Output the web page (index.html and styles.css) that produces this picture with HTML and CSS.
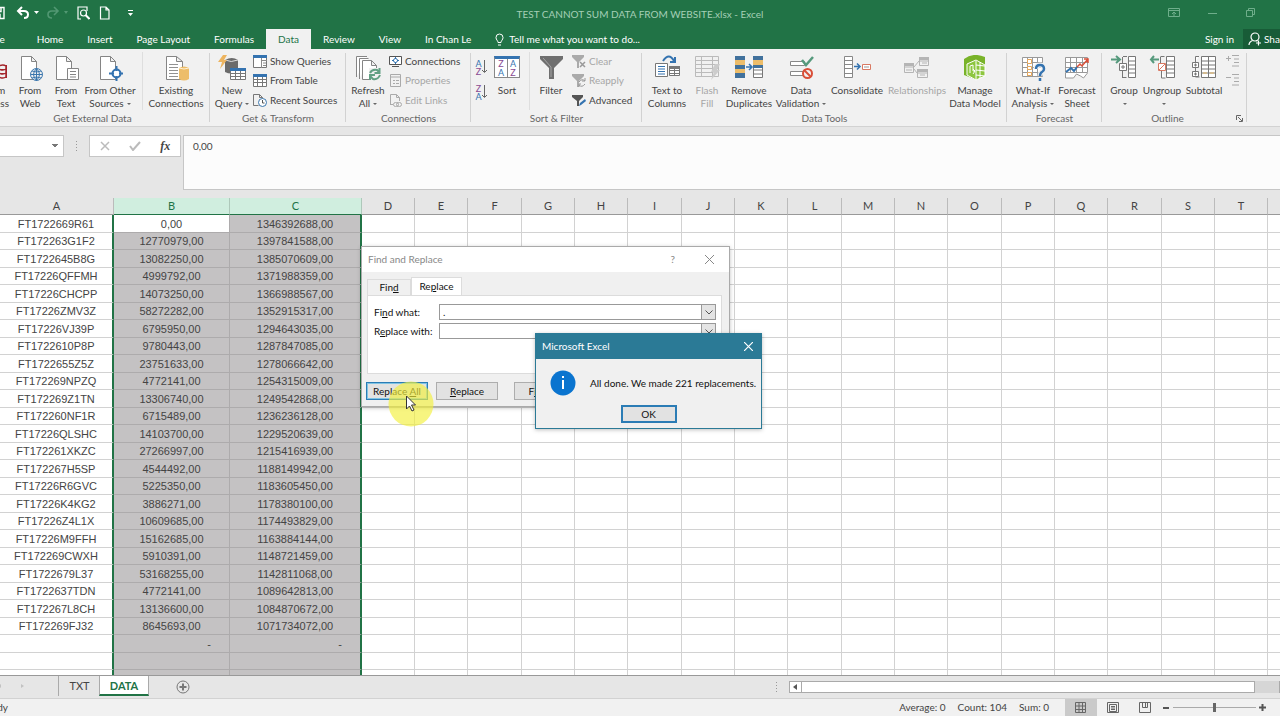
FILE: index.html
```html
<!DOCTYPE html>
<html lang="en">
<head>
    <meta charset="UTF-8">
    <title>TEST CANNOT SUM DATA FROM WEBSITE.xlsx - Excel</title>
    <link rel="stylesheet" href="styles.css">
    <script src="script.js" defer></script>
</head>
<body>
    <header class="titlebar">
        <div class="quick">
            <button class="tool" aria-label="Save"><svg width="14" height="14" fill="none" stroke="#fff" stroke-width="1.4"><path d="M1 1.500h12v11H3l-2-2zM4 1.500v4h6v-4M4 12.500v-4h5v4"/></svg></button>
            <button class="tool undo" aria-label="Undo"><svg width="24" height="14" fill="none" stroke="#fff" stroke-width="2"><path d="M6 1 2 5l4 4M2 5h6q4 0 4 3.500T8 12"/><path d="M18 5h5l-2.500 3z" fill="#fff" stroke="none"/></svg></button>
            <button class="tool redo" aria-label="Redo"><svg width="24" height="14" fill="none" stroke="#529873" stroke-width="1.600"><path d="M8 1l4 4-4 4M12 5H6Q2 5 2 8.500T6 12"/><path d="M18 5h4l-2 3z" fill="#529873" stroke="none"/></svg></button>
            <button class="tool preview" aria-label="Print Preview"><svg width="14" height="14" fill="none" stroke="#fff" stroke-width="1.200"><path d="M11 5V1H2v12h3"/><circle cx="7.500" cy="7" r="3"/><path d="M9.500 9l4 4" stroke-width="2"/></svg></button>
            <button class="tool new" aria-label="New"><svg width="12" height="14" fill="none" stroke="#fff" stroke-width="1.200"><path d="M1.500 1H7l3 3v9H1.500zM7 1v3h3"/></svg></button>
            <button class="tool" aria-label="Customize"><svg width="8" height="8"><path d="M1 1h5v1H1zM1 4h5L3.500 7z" fill="#fff"/></svg></button>
        </div>
        <h1 class="title">TEST CANNOT SUM DATA FROM WEBSITE.xlsx - Excel</h1>
        <div class="window-tools">
            <button class="tool" aria-label="Ribbon options"><svg width="12" height="10" fill="none" stroke="#6fae8b"><path d="M.5.5h11v8H.5zM.5 2.500h11M6 8V4M4 6l2-2 2 2"/></svg></button>
            <button class="tool" aria-label="Minimize"><svg width="10" height="10" stroke="#6fae8b"><path d="M0 5.500h9"/></svg></button>
            <button class="tool" aria-label="Restore"><svg width="10" height="10" fill="none" stroke="#6fae8b"><path d="M.5 2.500h6v6h-6zM2.500 2V.5h6v6H7"/></svg></button>
        </div>
    </header>

    <nav class="tabs">
        <a class="tab file" href="#">File</a>
        <a class="tab" href="#">Home</a>
        <a class="tab" href="#">Insert</a>
        <a class="tab" href="#">Page Layout</a>
        <a class="tab" href="#">Formulas</a>
        <a class="tab active" href="#">Data</a>
        <a class="tab" href="#">Review</a>
        <a class="tab" href="#">View</a>
        <a class="tab" href="#">In Chan Le</a>
        <a class="tab tell" href="#"><svg width="9" height="13" fill="none" stroke="#fff"><path d="M3 9.500C3 7.500 1 7 1 4.500a3.500 3.500 0 0 1 7 0C8 7 6 7.500 6 9.500zM3 12h3"/></svg>Tell me what you want to do...</a>
        <a class="sign" href="#">Sign in</a>
        <a class="share" href="#"><svg width="14" height="14" fill="none" stroke="#fff" stroke-width="1.200"><circle cx="7" cy="5" r="4"/><path d="M1 13q0-3 3.500-4.500M8 8.500l1.500.5M10.500 8.500v5M8 11h5"/></svg>Share</a>
    </nav>

    <section class="ribbon">
        <div class="group external">
            <div class="items">
                <button class="big w36"><svg width="26" height="26"><path d="M3.500 1.500h10l5 5v18h-15zM13.500 1.500v5h5" fill="#fff" stroke="#858585"/><path d="M12 10h14v13H12z" fill="#a4262c"/><path d="M18 11q4-2 7 0v11q-3 2-7 0zM18 14q4 2 7 0M18 18q4 2 7 0" fill="#f1f1f1" stroke="#a4262c" stroke-width="1.500"/></svg><span>From<br>Access</span></button>
                <button class="big w36"><svg width="26" height="26" fill="none"><path d="M4.500 1.500h10l5 5v18h-15zM14.500 1.500v5h5" fill="#fff" stroke="#858585"/><circle cx="19.500" cy="19.500" r="6" fill="#f1f1f1" stroke="#3a76ad"/><path d="M13.500 19.500h12M19.500 13.500v12M15 16q4.500 2 9 0M15 23q4.500-2 9 0M19.500 13.500q-6 6 0 12 6-6 0-12" stroke="#3a76ad"/></svg><span>From<br>Web</span></button>
                <button class="big w36"><svg width="26" height="26" fill="#fff" stroke="#858585"><path d="M3.500 1.500h10l5 5v18h-15zM13.500 1.500v5h5"/><path d="M14.500 13.500h11v11h-11zM17 16.500h6M17 19.500h6M17 22h6"/></svg><span>From<br>Text</span></button>
                <button class="big w52"><svg width="26" height="26" fill="none"><path d="M3.500 1.500h10l5 5v18h-15zM13.500 1.500v5h5" fill="#fff" stroke="#858585"/><circle cx="19.500" cy="18.500" r="4" fill="#fff" stroke="#3473b0" stroke-width="2"/><path d="M19.500 11v5M19.500 21v5M12 18.500h5M22 18.500h5" stroke="#3473b0" stroke-width="2"/></svg><span>From Other<br>Sources<i class="arrow"></i></span></button>
                <i class="rule"></i>
                <button class="big w60"><svg width="26" height="26"><path d="M3.500 1.500h10l6 5v18h-16zM13.500 1.500v5h6" fill="#fff" stroke="#858585"/><path d="M6 9.500h9M6 12.500h9M6 15.500h9M6 18.500h9M6 21.500h9" stroke="#929292"/><path d="M16 13q5-3 10 0v11q-5 3-10 0z" fill="#edbd6a"/><path d="M16 13q5 2 10 0" stroke="#fff1d3" fill="none"/></svg><span>Existing<br>Connections</span></button>
            </div>
            <h2>Get External Data</h2>
        </div>
        <div class="group transform">
            <div class="items">
                <button class="big w36"><svg width="28" height="26"><path d="M7 5v12q6 3 13 0V5q-6-4-13 0" fill="#6b6b6b"/><path d="M7 5q6 3 13 0" stroke="#ddd" fill="none"/><path d="M5 0H9L6 5h3L2 14l2-7H0z" fill="#edb45f"/><path d="M12.500 13.500h15v11h-15z" fill="#fff" stroke="#777"/><path d="M12 13h16v3H12z" fill="#3473b0"/><path d="M12.500 18.500h15M12.500 21.500h15M17.500 16v9M22.500 16v9" stroke="#777"/></svg><span>New<br>Query<i class="arrow"></i></span></button>
                <div class="stack">
                    <button class="small"><svg width="14" height="13"><path d="M.5.5h13v12H.5z" fill="#fff" stroke="#777"/><path d="M0 0h14v3H0z" fill="#3473b0"/><path d="M8.500 3v10M9 5.500h5M10 8h3M10 10.500h3" stroke="#8c8c8c"/></svg>Show Queries</button>
                    <button class="small"><svg width="14" height="13"><path d="M.5.5h13v12H.5z" fill="#fff" stroke="#777"/><path d="M0 0h14v3H0z" fill="#3473b0"/><path d="M0 5.500h14M0 8.500h14M4.500 3v10M9.500 3v10" stroke="#777"/></svg>From Table</button>
                    <button class="small"><svg width="14" height="13" fill="none"><path d="M.5.5h6l3 3v4M6.500.5v3h3M.5.5v11h5" stroke="#777"/><circle cx="9.500" cy="8.500" r="4" fill="#fff" stroke="#3a76ad"/><path d="M9.500 6v3h2" stroke="#555"/></svg>Recent Sources</button>
                </div>
            </div>
            <h2>Get &amp; Transform</h2>
        </div>
        <div class="group connections">
            <div class="items">
                <button class="big w36"><svg width="26" height="26" fill="none"><path d="M1.500 22V1.500H12M4.500 24V3.500h9M7.500 24.500V5.500h9l5 5v14zM16.500 5.500v5h5" fill="#fff" stroke="#858585"/><path d="M14 13h12v13H14z" fill="#f1f1f1"/><path d="M15 18q2-4 7-3l2 2M25 20q-2 5-7 4l-3-3M24.500 13v5h-5M15 25v-5h5" stroke="#62a083" stroke-width="2"/></svg><span>Refresh<br>All<i class="arrow"></i></span></button>
                <div class="stack">
                    <button class="small"><svg width="13" height="13" fill="none"><path d="M.5 1.500h12v8H.5zM3 11.500h7" fill="#fff" stroke="#555"/><circle cx="6.500" cy="5.500" r="2" stroke="#3473b0"/><path d="M6.500 2v2M6.500 7v2M3 5.500h2M8 5.500h2" stroke="#3473b0"/></svg>Connections</button>
                    <button class="small" disabled><svg width="13" height="13" fill="none" stroke="#aaa"><path d="M1.500.5h10v12h-10zM1.500 3h10M4 6.500h2M7 6.500h3M4 9.500h2M7 9.500h3"/></svg>Properties</button>
                    <button class="small" disabled><svg width="13" height="13" fill="none" stroke="#aaa"><path d="M1.500 11V.5h6l3 3V7M7.500.5v3h3M1.500 10.500H4"/><rect x="4.500" y="8.500" width="5" height="4" rx="2"/><rect x="7.500" y="8.500" width="5" height="4" rx="2"/></svg>Edit Links</button>
                </div>
            </div>
            <h2>Connections</h2>
        </div>
        <div class="group sorting">
            <div class="items">
                <div class="orders">
                    <button class="order" aria-label="Sort A to Z"><b>A</b><b class="z">Z</b><svg width="5" height="14" fill="none" stroke="#666"><path d="M2.500 0v12M0 10l2.500 2.500L5 10"/></svg></button>
                    <button class="order" aria-label="Sort Z to A"><b class="z">Z</b><b>A</b><svg width="5" height="14" fill="none" stroke="#666"><path d="M2.500 0v12M0 10l2.500 2.500L5 10"/></svg></button>
                </div>
                <button class="big w32"><span class="sort-icon"><b class="z">Z</b><b>A</b><b>A</b><b class="z">Z</b></span><span>Sort</span></button>
                <i class="rule"></i>
                <button class="big w36"><svg width="26" height="26"><path d="M2 1h23v3l-9 9v11h-5V13L2 4z" fill="#6f6f6f"/><path d="M5 3l8 9v10" fill="none" stroke="#a5a5a5"/></svg><span>Filter</span></button>
                <div class="stack">
                    <button class="small" disabled><svg width="14" height="13"><path d="M0 0h12v2L7 7v6H5V7L0 2z" fill="#aaa"/><path d="M8 7l5 5M13 7l-5 5" stroke="#999" stroke-width="1.500"/></svg>Clear</button>
                    <button class="small" disabled><svg width="14" height="13" fill="none"><path d="M0 0h12v2L7 7v6H5V7L0 2z" fill="#aaa"/><path d="M7 8q3-4 6-1M13 4v3h-3M13 10q-3 4-6 1M7 13v-3h2" stroke="#999"/></svg>Reapply</button>
                    <button class="small"><svg width="14" height="13"><path d="M0 1h11v2L7 7v5H5V7L0 3z" fill="#555"/><path d="M7 12l1-3 5-4 1 2-5 4z" fill="#3473b0"/></svg>Advanced</button>
                </div>
            </div>
            <h2>Sort &amp; Filter</h2>
        </div>
        <div class="group tools">
            <div class="items">
                <button class="big w48"><svg width="26" height="26" fill="none"><path d="M1.500 8.500h12v13h-12z" fill="#fff" stroke="#777"/><path d="M4 11.500h7M4 14h7M4 16.500h7M4 19h7" stroke="#3473b0"/><path d="M9 6q6-9 11 0M21 2v5h-5" stroke="#3473b0" stroke-width="2"/><path d="M15.500 11.500h10v9h-10zM15.500 15.500h10M15.500 18.500h10M20.500 12v9" fill="#fff" stroke="#777"/><path d="M15 11h11v3H15z" fill="#777"/></svg><span>Text to<br>Columns</span></button>
                <button class="big w32" disabled><svg width="26" height="26" fill="none" stroke="#bbb"><path d="M1.500 1.500h23v20h-23zM1.500 5.500h23M1.500 9.500h23M1.500 13.500h23M1.500 17.500h18M7.500 2v20M18.500 2v20"/><path d="M21 9h5l-3 6h3l-9 10 3-8h-3z" fill="#ccc" stroke="none"/></svg><span>Flash<br>Fill</span></button>
                <button class="big w52"><svg width="28" height="26" fill="#fff" stroke="#777"><path d="M.5 1.500h9v21h-9zM18.500 1.500h9v21h-9zM18.500 15h9M18.500 19h9"/><path d="M0 1h10v4H0zM0 10h10v4H0zM0 18h10v5H0zM18 1h10v4H18z" fill="#41719c" stroke="none"/><path d="M0 5h10v5H0zM0 14h10v4H0zM18 5h10v5H18z" fill="#edbd6a" stroke="none"/><path d="M18 10h10v3H18z" fill="#41719c" stroke="none"/><path d="M11 12h5M14 9l3 3-3 3" stroke="#3473b0" stroke-width="1.500" fill="none"/></svg><span>Remove<br>Duplicates</span></button>
                <button class="big w52"><svg width="26" height="26" fill="none"><path d="M2.500 6.500h14v4h-14zM2.500 16.500h14v4h-14z" fill="#fff" stroke="#888"/><path d="M14 5l4 5 7-8" stroke="#569a7d" stroke-width="2.500"/><circle cx="19.500" cy="18.500" r="4.500" fill="#f1f1f1" stroke="#d94f38" stroke-width="2"/><path d="M16 15l7 7" stroke="#d94f38" stroke-width="2"/></svg><span>Data<br>Validation<i class="arrow"></i></span></button>
                <button class="big w60"><svg width="28" height="26" fill="none"><path d="M1.500 1.500h8v21h-8zM1.500 5.500h8M1.500 9.500h8M1.500 13.500h8M1.500 18.500h8" fill="#fff" stroke="#888"/><path d="M11 11.500h6M14 8.500l3 3-3 3" stroke="#3473b0" stroke-width="1.500"/><path d="M19.500 9.500h8v5h-8z" fill="#fff" stroke="#d97962"/><path d="M21 12h5" stroke="#999"/></svg><span>Consolidate</span></button>
                <button class="big w60" disabled><svg width="26" height="26" fill="none" stroke="#b5b5b5"><path d="M.5 8.500h9v9h-9zM.5 12h9M2 15h6M15.500 2.500h9v8h-9zM15.500 6h9M18 8h5M13.500 14.500h10v8h-10zM13.500 18h10M16 20h5M10 12l5-6M10 14l3 4"/><path d="M0 8h10v3H0zM15 2h10v3H15zM13 14h11v3H13z" fill="#b5b5b5" stroke="none"/></svg><span>Relationships</span></button>
                <button class="big w56"><svg width="26" height="26"><path d="M2 4q9-7 21-2v14L15 25 2 20z" fill="#79b329"/><path d="M5 9l9-4 9 5v11l-9 4-9-5z" fill="#8dc63f" stroke="#fff"/><path d="M14 6v19M14 10l9 1M14 15l9 1M14 20l9 1M18 7v16" stroke="#fff"/><path d="M8 18v-7l3-1v6h2M11 14l2 2-2 3" fill="none" stroke="#fff"/></svg><span>Manage<br>Data Model</span></button>
            </div>
            <h2>Data Tools</h2>
        </div>
        <div class="group forecast">
            <div class="items">
                <button class="big w44"><svg width="26" height="26" fill="none"><path d="M2.500 2.500h20v19h-20zM2.500 7.500h20M2.500 12.500h20M2.500 17.500h20M7.500 2v20M12.500 2v20M17.500 2v20" fill="#fff" stroke="#999"/><path d="M7.500 4.500h4v4h-4zM7.500 11.500h4v3h-4zM7.500 17.500h4v3h-4z" fill="#fff" stroke="#e6a75a"/><path d="M16 14q0-4 4-4t4 4q0 2-2 3t-2 4" stroke="#f1f1f1" stroke-width="5"/><path d="M16 14q0-4 4-4t4 4q0 2-2 3t-2 4M20 23v3" stroke="#3473b0" stroke-width="2.500"/></svg><span>What-If<br>Analysis<i class="arrow"></i></span></button>
                <button class="big w44"><svg width="26" height="26" fill="none"><path d="M1.500 2.500h22v15h-22zM1.500 7.500h22M1.500 12.500h22M6.500 3v15M12.500 3v15M18.500 3v15M1.500 18v5h8l3-4 4 2 3 2 4-5" fill="#fff" stroke="#999"/><path d="M2 17l5-4 3 3 3-4" stroke="#3473b0" stroke-width="2"/><path d="M13 12l3-3 2 2 6-7M20 4h4v4" stroke="#d94f38" stroke-width="1.500"/></svg><span>Forecast<br>Sheet</span></button>
            </div>
            <h2>Forecast</h2>
        </div>
        <div class="group outline">
            <div class="items">
                <button class="big w36"><svg width="26" height="26" fill="none" stroke="#777"><path d="M17.500 1.500h7v21h-7zM17.500 6h7M17.500 10h7M17.500 14h7M17.500 18h7M12 1.500h4M11.500 2v7M11.500 15v8M11.500 22.500h4M8.500 8.500h7v7h-7zM10 12h4M12 10v4" fill="#fff"/><path d="M0 4.500h8M5 1l4 3.500L5 8" stroke="#569a7d" stroke-width="2"/></svg><span>Group<br><i class="arrow"></i></span></button>
                <button class="big w40"><svg width="26" height="26" fill="none" stroke="#777"><path d="M17.500 1.500h8v21h-8zM17.500 6h8M17.500 10h8M17.500 14h8M17.500 18h8M11.500 1.500h4M11.500 2v7M12.500 16v7h4" fill="#fff"/><path d="M9.500 8.500h7v7h-7zM10 15l6-6" fill="#fff" stroke="#d97962"/><path d="M2 4.500h8M5 1L2 4.500 5 8" stroke="#569a7d" stroke-width="2"/></svg><span>Ungroup<br><i class="arrow"></i></span></button>
                <button class="big w44"><svg width="26" height="26" fill="#fff" stroke="#777"><path d="M10.500 1.500h14v21h-14zM10.500 6h14M10.500 10h14M10.500 14h14M10.500 18h14M17.500 2v20M8 1.500H4.500V7M4.500 13v3M4.500 22h4M1.500 7.500h6v5h-6zM1.500 16.500h6v5h-6zM3 10h3M4.500 8.500v3M3 19h3M4.500 17.500v3"/><path d="M12 18h4M19 18h4" stroke="#edbd6a"/></svg><span>Subtotal</span></button>
                <div class="details">
                    <button class="tool" aria-label="Show Detail" disabled><svg width="13" height="12" fill="none" stroke="#aaa"><path d="M0 3.500h5M2.500 1v5M6 .5h7M8 4h5M8 7.500h5M6 11h7"/></svg></button>
                    <button class="tool" aria-label="Hide Detail" disabled><svg width="13" height="12" fill="none" stroke="#aaa"><path d="M0 3.500h5M6 .5h7M8 4h5M8 7.500h5M6 11h7"/></svg></button>
                </div>
            </div>
            <h2>Outline</h2>
            <button class="launcher" aria-label="Outline settings"><svg width="7" height="7" fill="none" stroke="#666"><path d="M.5 5V.5H5M2 2l4 4M6.500 3v3.500H3"/></svg></button>
        </div>
    </section>

    <section class="formula">
        <select class="name-box" aria-label="Name Box"><option></option></select>
        <i class="dots"></i>
        <div class="entry">
            <button class="tool" aria-label="Cancel"><svg width="10" height="10" stroke="#bbb" stroke-width="1.500"><path d="M1 1l8 8M9 1L1 9"/></svg></button>
            <button class="tool" aria-label="Enter"><svg width="12" height="10" fill="none" stroke="#bbb" stroke-width="2"><path d="M1 5l3 4 7-8"/></svg></button>
            <button class="tool fx" aria-label="Insert Function">fx</button>
        </div>
        <textarea class="formula-text" aria-label="Formula bar">0,00</textarea>
    </section>

    <main class="sheet">
        <table>
            <colgroup id="cols"></colgroup>
            <thead><tr id="letters"></tr></thead>
            <tbody id="rows"></tbody>
        </table>
    </main>

    <footer>
        <div class="sheet-bar">
            <span class="move"><i></i><i></i></span>
            <a class="sheet-tab" href="#">TXT</a>
            <a class="sheet-tab current" href="#">DATA</a>
            <button class="tool add" aria-label="New sheet"><svg width="14" height="14" fill="none" stroke="#777"><circle cx="7" cy="7" r="6"/><path d="M3.500 7h7M7 3.500v7" stroke-width="2"/></svg></button>
            <i class="dots"></i>
            <div class="scroll">
                <button class="back" aria-label="Scroll left"><svg width="4" height="6"><path d="M4 0v6L0 3z" fill="#555"/></svg></button>
                <div class="thumb"></div>
                <button class="forward" aria-label="Scroll right"></button>
            </div>
        </div>
        <div class="status">
            <span class="ready">Ready</span>
            <span class="sum">Average: 0</span>
            <span class="sum">Count: 104</span>
            <span class="sum">Sum: 0</span>
            <div class="views">
                <button class="view current" aria-label="Normal"><svg width="12" height="12" fill="none" stroke="#666"><path d="M.5.5h10v10H.5zM.5 4h10M.5 7.500h10M4 .5v10M7.500.5v10"/></svg></button>
                <button class="view" aria-label="Page Layout"><svg width="12" height="12" fill="none" stroke="#666"><path d="M.5.5h11v10H.5zM2.500 2.500h7v7h-7zM4 4.500h4M4 6h4M4 7.500h4"/></svg></button>
                <button class="view" aria-label="Page Break Preview"><svg width="12" height="12" fill="none" stroke="#666"><path d="M.5.5h11v10H.5zM3.500.5v5h5v-5M6.500.5v5"/></svg></button>
            </div>
            <button class="zoom" aria-label="Zoom out"><svg width="6" height="6"><path d="M0 2h6v2H0z" fill="#555"/></svg></button>
            <input class="slider" type="range" aria-label="Zoom" value="50">
            <button class="zoom" aria-label="Zoom in"><svg width="7" height="7" fill="none" stroke="#555" stroke-width="2"><path d="M0 3.500h7M3.500 0v7"/></svg></button>
        </div>
    </footer>

    <div class="dialog find" role="dialog" aria-label="Find and Replace">
        <div class="dialog-title">Find and Replace
            <button class="help" aria-label="Help">?</button>
            <button class="close" aria-label="Close"><svg width="9" height="9" stroke="#888"><path d="M0 0l9 9M9 0L0 9"/></svg></button>
        </div>
        <div class="dialog-tabs">
            <button class="dialog-tab">Fin<u>d</u></button>
            <button class="dialog-tab current">Re<u>p</u>lace</button>
        </div>
        <div class="fields">
            <label for="what">Fi<u>n</u>d what:</label>
            <div class="combo"><input id="what" type="text" value="."><button aria-label="History"><svg width="8" height="5" fill="none" stroke="#555"><path d="M.5.5L4 4 7.500.5"/></svg></button></div>
            <label for="with">R<u>e</u>place with:</label>
            <div class="combo"><input id="with" type="text"><button aria-label="History"><svg width="8" height="5" fill="none" stroke="#555"><path d="M.5.5L4 4 7.500.5"/></svg></button></div>
        </div>
        <div class="actions">
            <button class="action focus">Replace <u>A</u>ll</button>
            <button class="action"><u>R</u>eplace</button>
            <button class="action next">F<u>i</u>nd All</button>
        </div>
    </div>

    <div class="dialog message" role="alertdialog" aria-label="Microsoft Excel">
        <div class="message-title">Microsoft Excel
            <button class="close" aria-label="Close"><svg width="9" height="9" stroke="#fff" stroke-width="1.200"><path d="M0 0l9 9M9 0L0 9"/></svg></button>
        </div>
        <div class="message-text">
            <svg width="26" height="26"><circle cx="13" cy="13" r="12.500" fill="#0a74cf"/><path d="M12 10h2v9h-2zM12 6h2v2h-2z" fill="#fff"/></svg>
            <p>All done. We made 221 replacements.</p>
        </div>
        <button class="ok">OK</button>
    </div>

    <div class="pointer"><svg width="46" height="46"><circle cx="23" cy="23" r="22.500" fill="#f3f03c" fill-opacity=".65"/><path d="M18.500 15v13l3-3 2.500 5 2-1-2.500-5h4z" fill="#fff" stroke="#333"/></svg></div>
</body>
</html>
```
FILE: styles.css
```css
* {
    box-sizing: border-box;
}

body {
    margin: 0;
    padding-bottom: 4px;
    height: 100vh;
    display: flex;
    flex-direction: column;
    overflow: hidden;
    position: relative;
    background-color: #fff;
    color: #444;
    font-family: Lato, "Open Sans", sans-serif;
    font-size: 10px;
    line-height: 13px;
}

button,
input,
select,
textarea {
    font: inherit;
    color: inherit;
    margin: 0;
    padding: 0;
    border: none;
    border-radius: 0;
    background: none;
}

a {
    color: inherit;
    text-decoration: none;
}

svg {
    display: block;
    flex: none;
}

.tool {
    display: flex;
}

/* Title bar */
.titlebar {
    display: grid;
    grid-template-columns: 1fr auto 1fr;
    align-items: center;
    height: 29px;
    background-color: #217346;
    color: #a5cfb6;
}

.quick {
    display: flex;
    align-items: center;
    margin-left: -9px;
    padding-bottom: 4px;
}

.undo {
    margin-left: 11px;
}

.redo,
.preview {
    margin-left: 6px;
}

.new {
    margin: 0 16px 0 9px;
}

.title {
    margin: 0;
    font-size: 10px;
    font-weight: normal;
}

.window-tools {
    display: flex;
    justify-content: flex-end;
    gap: 28px;
    padding: 0 24px 4px 0;
}

/* Ribbon tabs */
.tabs {
    display: flex;
    height: 20px;
    margin-left: -23px;
    line-height: 20px;
    background-color: #217346;
    color: #fff;
}

.tab {
    padding: 0 12px;
    white-space: nowrap;
}

.tab.file {
    padding-right: 20px;
}

.tab.active {
    background-color: #f1f1f1;
    color: #217346;
}

.tell,
.share {
    display: flex;
    align-items: center;
    gap: 5px;
}

.sign {
    margin-left: auto;
    padding-right: 9px;
}

.share {
    width: 37px;
    padding-left: 5px;
    gap: 2px;
    overflow: hidden;
    background-color: #185c37;
}

/* Ribbon */
.ribbon {
    display: flex;
    height: 78px;
    margin-left: -25px;
    background-color: #f1f1f1;
    border-bottom: 1px solid #d2d2d2;
}

.group {
    position: relative;
    flex: none;
    display: flex;
    flex-direction: column;
    padding-top: 3px;
}

.group::after {
    content: "";
    position: absolute;
    top: 4px;
    right: 0;
    bottom: 4px;
    border-right: 1px solid #d2d2d2;
}

.external {
    width: 235px;
}

.transform {
    width: 136px;
}

.connections {
    width: 125px;
}

.sorting {
    width: 171px;
}

.tools {
    width: 365px;
}

.forecast {
    width: 95px;
}

.outline {
    width: 145px;
}

.group h2 {
    margin: 0;
    font-size: 10px;
    font-weight: normal;
    line-height: 16px;
    text-align: center;
    color: #666;
}

.outline h2 {
    padding-right: 14px;
}

.items {
    display: flex;
    height: 59px;
    padding-left: 4px;
}

.external .items,
.tools .items {
    padding-left: 1px;
}

.big {
    display: flex;
    flex-direction: column;
    align-items: center;
    flex: none;
    padding-top: 3px;
    white-space: nowrap;
}

.big svg {
    margin-bottom: 3px;
}

.w32 {
    width: 32px;
}

.w36 {
    width: 36px;
}

.w40 {
    width: 40px;
}

.w44 {
    width: 44px;
}

.w48 {
    width: 48px;
}

.w52 {
    width: 52px;
}

.w56 {
    width: 56px;
}

.w60 {
    width: 60px;
}

.arrow {
    display: inline-block;
    margin: 0 0 2px 3px;
    border: 2px solid transparent;
    border-top-color: #666;
    border-bottom: none;
}

.rule {
    width: 1px;
    margin: 0 3px 0 6px;
    background-color: #dedede;
}

.stack {
    display: grid;
    grid-template-rows: repeat(3, 1fr);
    margin-left: 3px;
}

.small {
    display: flex;
    align-items: center;
    gap: 3px;
    white-space: nowrap;
}

button:disabled {
    color: #a6a6a6;
}

.orders {
    display: flex;
    flex-direction: column;
    gap: 9px;
    margin-right: 4px;
    padding-top: 8px;
}

.order {
    display: grid;
    grid-template-columns: 7px 5px;
    grid-template-rows: 8px 8px;
    line-height: 8px;
}

.order svg {
    grid-area: 1 / 2 / 3 / 3;
}

.order b,
.sort-icon b {
    font-size: 9px;
    font-weight: normal;
    color: #3473b0;
}

.order .z,
.sort-icon .z {
    color: #8a4a93;
}

.sort-icon {
    display: grid;
    grid-template-columns: 12px 12px;
    grid-template-rows: 9px 9px;
    margin: 1px 0 6px;
    line-height: 9px;
    border: 1px solid #888;
    border-top: 3px solid #3473b0;
    background: linear-gradient(#888, #888) center / 1px 100% no-repeat #fff;
}

.details {
    display: flex;
    flex-direction: column;
    gap: 7px;
    padding-top: 3px;
}

.launcher {
    position: absolute;
    right: 4px;
    bottom: 4px;
}

/* Formula bar */
.formula {
    display: flex;
    align-items: flex-start;
    height: 71px;
    padding-top: 8px;
    background-color: #e6e6e6;
}

.name-box {
    appearance: none;
    width: 64px;
    height: 22px;
    border: 1px solid #c6c6c6;
    border-left: none;
    /* two triangles side by side draw the arrow */
    background: linear-gradient(to top right, transparent 50%, #777 50%) 52px 8px / 3px 4px no-repeat, linear-gradient(to top left, transparent 50%, #777 50%) 55px 8px / 3px 4px no-repeat, #fff;
}

.dots {
    width: 1px;
    height: 10px;
    margin: 6px 12px 0;
    background: repeating-linear-gradient(#999 0 1px, transparent 1px 3px);
}

.entry {
    display: flex;
    align-items: center;
    justify-content: space-around;
    width: 92px;
    height: 22px;
    border: 1px solid #c6c6c6;
    background-color: #fff;
}

.fx {
    font-family: "Liberation Serif", serif;
    font-size: 12px;
    font-style: italic;
    font-weight: bold;
}

.formula-text {
    flex: 1;
    height: 55px;
    margin-left: 2px;
    padding: 4px 9px;
    border: 1px solid #c6c6c6;
    border-right: none;
    background-color: #fcfcfc;
    resize: none;
}

/* Sheet */
.sheet {
    flex: 1;
    min-height: 0;
    overflow: hidden;
}

table {
    width: 0;
    table-layout: fixed;
    border-spacing: 0;
}

.col-a {
    width: 114px;
}

.col-b {
    width: 116px;
}

.col-c {
    width: 132px;
}

.col {
    width: 53px;
}

.col:nth-child(3n) {
    width: 54px;
}

th,
td {
    padding: 0;
    text-align: center;
    overflow: hidden;
    white-space: nowrap;
    border-right: 1px solid #d2d2d2;
}

th {
    height: 17px;
    font-size: 11px;
    font-weight: normal;
    line-height: 16px;
    background-color: #e6e6e6;
    border-bottom: 1px solid #999;
    border-right-color: #bbb;
}

td {
    height: 18px;
    font-family: "Liberation Sans", Arial, sans-serif;
    font-size: 11px;
    line-height: 16px;
    border-bottom: 1px solid #d2d2d2;
}

tr:nth-child(even) td {
    height: 17px;
}

.picked {
    background-color: #c4c2c3;
    border-color: #adabac;
}

th.picked {
    background-color: #d0eedf;
    color: #217346;
    border-right-color: #aec8ba;
    border-bottom-color: #217346;
}

td:nth-child(1),
td:nth-child(3) {
    border-right: 2px solid #217346;
}

tr:first-child td:nth-child(2) {
    background-color: #fff;
}

.picked.dash {
    padding-right: 18px;
    text-align: right;
}

/* Sheet tabs and status bar */
.sheet-bar {
    display: flex;
    height: 23px;
    background-color: #e6e6e6;
    border-top: 1px solid #999;
}

.move {
    display: flex;
    align-items: center;
    gap: 20px;
    width: 59px;
    height: 20px;
    margin-right: 1px;
    border-right: 1px solid #aaa;
}

.move i {
    border: 2px solid transparent;
    border-left: 3px solid #c2c2c2;
    border-right: none;
}

.move i:first-child {
    border-left: none;
    border-right: 3px solid #c2c2c2;
    margin-left: -2px;
}

.sheet-tab {
    width: 39px;
    height: 20px;
    font-size: 11px;
    line-height: 20px;
    text-align: center;
}

.sheet-tab.current {
    width: 50px;
    font-weight: bold;
    color: #217346;
    background-color: #fff;
    border: 1px solid #aaa;
    border-top: none;
    border-bottom: 2px solid #217346;
}

.add {
    margin: 4px auto 0 27px;
}

.scroll {
    display: flex;
    width: calc(39% + 4px);
    height: 12px;
    margin-top: 5px;
    margin-right: -12px;
    background-color: #d6d6d6;
}

.back,
.forward {
    display: flex;
    align-items: center;
    justify-content: center;
    width: 13px;
    border: 1px solid #aaa;
    background-color: #fff;
}

.thumb {
    flex: 1;
    margin-right: 24px;
    border: 1px solid #aaa;
    border-left: none;
    background-color: #fff;
}

.status {
    display: flex;
    align-items: center;
    height: 18px;
    padding-right: 14px;
    background-color: #f1f1f1;
    border-top: 1px solid #d2d2d2;
}

.ready {
    margin: 0 auto 0 -19px;
}

.sum {
    margin-right: 12px;
}

.views {
    display: flex;
    height: 17px;
    margin: 0 2px 0 4px;
}

.view {
    display: flex;
    align-items: center;
    justify-content: center;
    width: 32px;
}

.view.current {
    background-color: #cacaca;
}

.slider {
    appearance: none;
    width: 83px;
    height: 12px;
    margin: 0 3px 0 4px;
    background: linear-gradient(#aaa, #aaa) center / 100% 1px no-repeat;
}

.slider::-webkit-slider-thumb {
    appearance: none;
    width: 3px;
    height: 9px;
    background-color: #666;
}

/* Dialogs */
.dialog {
    position: absolute;
    color: #111;
    background-color: #f0f0f0;
}

.find {
    top: 246px;
    left: 361px;
    width: 369px;
    height: 161px;
    border: 1px solid #aaa;
    box-shadow: 0 1px 4px rgba(0, 0, 0, .25);
}

.dialog-title {
    display: flex;
    align-items: center;
    height: 25px;
    padding: 0 15px 0 6px;
    background-color: #fff;
    color: #888;
}

.help {
    margin: 0 30px 0 auto;
}

.dialog-tabs {
    display: flex;
    align-items: flex-end;
    height: 23px;
    padding-left: 5px;
}

.dialog-tab {
    width: 44px;
    height: 16px;
    border: 1px solid #dcdcdc;
    border-bottom: none;
}

.dialog-tab.current {
    width: 51px;
    height: 18px;
    background-color: #fff;
}

.fields {
    display: grid;
    grid-template-columns: 65px 1fr;
    grid-auto-rows: 16px;
    gap: 3px 0;
    align-items: center;
    height: 79px;
    margin: 0 7px 0 5px;
    padding: 8px 5px 0 6px;
    background-color: #fff;
    border: 1px solid #dcdcdc;
}

.combo {
    display: flex;
    height: 16px;
    border: 1px solid #999;
}

.combo input {
    flex: 1;
    padding-left: 3px;
}

.combo button {
    display: flex;
    align-items: center;
    justify-content: center;
    width: 14px;
    background-color: #e4e4e4;
    border-left: 1px solid #999;
}

.actions {
    display: flex;
    gap: 8px;
    padding: 8px 0 0 4px;
}

.action {
    width: 62px;
    height: 18px;
    background-color: #e2e2e2;
    border: 1px solid #adadad;
}

.focus {
    border-color: #2b7cb5;
    box-shadow: inset 0 0 0 1px #7fc4e4;
}

.next {
    margin-left: 8px;
}

.message {
    top: 333px;
    left: 535px;
    width: 227px;
    height: 96px;
    border: 1px solid #2b7a96;
    box-shadow: 0 1px 4px rgba(0, 0, 0, .25);
}

.message-title {
    display: flex;
    align-items: center;
    justify-content: space-between;
    height: 25px;
    padding: 0 8px 0 6px;
    background-color: #2b7a96;
    color: #fff;
}

.message-text {
    display: flex;
    align-items: center;
    gap: 14px;
    padding: 11px 0 9px 14px;
    white-space: nowrap;
}

.message-text p {
    margin: 0;
}

.ok {
    display: block;
    width: 56px;
    height: 18px;
    margin: 0 auto;
    background-color: #e2e2e2;
    border: 2px solid #2b7cb5;
}

/* Mouse pointer with its highlight */
.pointer {
    position: absolute;
    top: 381px;
    left: 388px;
    pointer-events: none;
}
```
FILE: script.js
```js
var codes = ['FT1722669R61', 'FT172263G1F2', 'FT1722645B8G', 'FT17226QFFMH', 'FT17226CHCPP', 'FT17226ZMV3Z',
    'FT17226VJ39P', 'FT1722610P8P', 'FT1722655Z5Z', 'FT172269NPZQ', 'FT172269Z1TN', 'FT172260NF1R',
    'FT17226QLSHC', 'FT172261XKZC', 'FT172267H5SP', 'FT17226R6GVC', 'FT17226K4KG2', 'FT17226Z4L1X',
    'FT17226M9FFH', 'FT172269CWXH', 'FT1722679L37', 'FT1722637TDN', 'FT172267L8CH', 'FT172269FJ32', '', '', ''];

var amounts = ['0,00', '12770979,00', '13082250,00', '4999792,00', '14073250,00', '58272282,00',
    '6795950,00', '9780443,00', '23751633,00', '4772141,00', '13306740,00', '6715489,00',
    '14103700,00', '27266997,00', '4544492,00', '5225350,00', '3886271,00', '10609685,00',
    '15162685,00', '5910391,00', '53168255,00', '4772141,00', '13136600,00', '8645693,00', '-', '', ''];

var balances = ['1346392688,00', '1397841588,00', '1385070609,00', '1371988359,00', '1366988567,00', '1352915317,00',
    '1294643035,00', '1287847085,00', '1278066642,00', '1254315009,00', '1249542868,00', '1236236128,00',
    '1229520639,00', '1215416939,00', '1188149942,00', '1183605450,00', '1178380100,00', '1174493829,00',
    '1163884144,00', '1148721459,00', '1142811068,00', '1089642813,00', '1084870672,00', '1071734072,00', '-', '', ''];

var letters = 'ABCDEFGHIJKLMNOPQRSTU';

function AddCell(row, tag, text, column)
{
    var cell = document.createElement(tag);
    cell.textContent = text;
    /* columns B and C are selected */
    if (column == 1 || column == 2)
    {
        cell.classList.add('picked');
    }
    if (text == '-')
    {
        cell.classList.add('dash');
    }
    row.appendChild(cell);
}

/* column widths and letters */
for (var i = 0; i < letters.length; i++)
{
    var col = document.createElement('col');
    col.className = i < 3 ? 'col-' + letters[i].toLowerCase() : 'col';
    document.getElementById('cols').appendChild(col);
    AddCell(document.getElementById('letters'), 'th', letters[i], i);
}

/* rows */
for (var r = 0; r < codes.length; r++)
{
    var row = document.createElement('tr');
    var values = [codes[r], amounts[r], balances[r]];
    for (var c = 0; c < letters.length; c++)
    {
        AddCell(row, 'td', values[c] || '', c);
    }
    document.getElementById('rows').appendChild(row);
}
```
